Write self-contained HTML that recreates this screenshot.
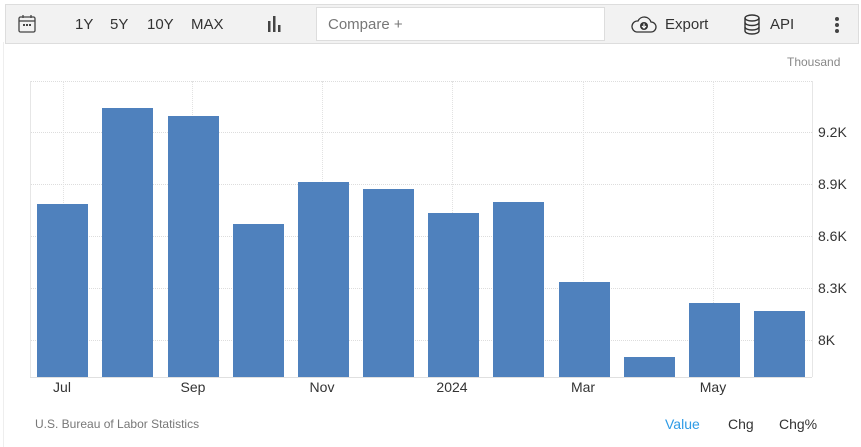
<!DOCTYPE html>
<html><head><style>
body{margin:0;width:861px;height:447px;background:#fff;font-family:"Liberation Sans",sans-serif;position:relative;overflow:hidden}
.a{position:absolute}
.tb{left:5px;top:4px;width:852px;height:38px;background:#f2f2f2;border:1px solid #ddd}
.t{font-size:15px;color:#333;top:16px}
.bar{position:absolute;background:#4f81bd;width:51px;bottom:70px}
.g{position:absolute;left:30px;width:782px;border-top:1px dotted #ddd}
.v{position:absolute;top:81px;height:296px;border-left:1px dotted #e2e2e2}
.yl{position:absolute;left:818px;font-size:14px;color:#333}
.xl{position:absolute;top:379px;font-size:14px;color:#333;width:60px;text-align:center}
</style></head><body>
<div class="a" style="left:3px;top:42px;width:1px;height:405px;background:#eee"></div>
<div class="a tb"></div>
<svg class="a" style="left:18px;top:14px" width="18" height="19" viewBox="0 0 18 19"><rect x="1" y="3" width="16" height="15" rx="1.5" fill="none" stroke="#444" stroke-width="1.3"/><line x1="1" y1="7" x2="17" y2="7" stroke="#444" stroke-width="1.3"/><line x1="5" y1="1" x2="5" y2="4" stroke="#444" stroke-width="1.3"/><line x1="13" y1="1" x2="13" y2="4" stroke="#444" stroke-width="1.3"/><rect x="5" y="10" width="2" height="2" fill="#444"/><rect x="8" y="10" width="2" height="2" fill="#444"/><rect x="11" y="10" width="2" height="2" fill="#444"/></svg>
<div class="a t" style="left:75px">1Y</div>
<div class="a t" style="left:110px">5Y</div>
<div class="a t" style="left:147px">10Y</div>
<div class="a t" style="left:191px">MAX</div>
<svg class="a" style="left:267px;top:16px" width="16" height="16"><rect x="1" y="5" width="2.5" height="11" fill="#444"/><rect x="6" y="0" width="2.5" height="16" fill="#444"/><rect x="11" y="9" width="2.5" height="7" fill="#444"/></svg>
<div class="a" style="left:316px;top:7px;width:287px;height:32px;background:#fff;border:1px solid #ddd"></div>
<div class="a t" style="left:328px;color:#777">Compare +</div>
<svg class="a" style="left:631px;top:16px" width="26" height="18" viewBox="0 0 26 18"><path d="M6 16 H20 A5 5 0 0 0 20 6 A7 7 0 0 0 7 5 A5.5 5.5 0 0 0 6 16 Z" fill="none" stroke="#333" stroke-width="1.3"/><circle cx="13" cy="10" r="4" fill="#333"/><path d="M13 7.5 V12 M11 10 L13 12 L15 10" stroke="#fff" stroke-width="1.2" fill="none"/></svg>
<div class="a t" style="left:665px">Export</div>
<svg class="a" style="left:743px;top:14px" width="18" height="21" viewBox="0 0 18 21"><g fill="none" stroke="#333" stroke-width="1.4"><ellipse cx="9" cy="4" rx="7" ry="3"/><path d="M2 4 V17 A7 3 0 0 0 16 17 V4"/><path d="M2 8.5 A7 3 0 0 0 16 8.5 M2 13 A7 3 0 0 0 16 13"/></g></svg>
<div class="a t" style="left:770px">API</div>
<div class="a" style="left:835px;top:17px;width:4px;height:4px;border-radius:2px;background:#444;box-shadow:0 6px 0 #444,0 12px 0 #444"></div>
<div class="a" style="left:787px;top:55px;font-size:12px;color:#888">Thousand</div>
<div class="g" style="top:81px"></div>
<div class="g" style="top:132px"></div>
<div class="g" style="top:184px"></div>
<div class="g" style="top:236px"></div>
<div class="g" style="top:288px"></div>
<div class="g" style="top:340px"></div>
<div class="v" style="left:30px;border-left:1px solid #e6e6e6"></div>
<div class="v" style="left:63px"></div><div class="v" style="left:192px"></div><div class="v" style="left:322px"></div><div class="v" style="left:452px"></div><div class="v" style="left:583px"></div><div class="v" style="left:713px"></div>
<div class="v" style="left:812px;border-left:1px solid #e6e6e6"></div>
<div class="a" style="left:30px;top:377px;width:782px;height:1px;background:#e0e0e0"></div>
<div class="bar" style="left:37px;top:204px"></div>
<div class="bar" style="left:102px;top:108px"></div>
<div class="bar" style="left:168px;top:116px"></div>
<div class="bar" style="left:233px;top:224px"></div>
<div class="bar" style="left:298px;top:182px"></div>
<div class="bar" style="left:363px;top:189px"></div>
<div class="bar" style="left:428px;top:213px"></div>
<div class="bar" style="left:493px;top:202px"></div>
<div class="bar" style="left:559px;top:282px"></div>
<div class="bar" style="left:624px;top:357px"></div>
<div class="bar" style="left:689px;top:303px"></div>
<div class="bar" style="left:754px;top:311px"></div>
<div class="yl" style="top:124px">9.2K</div>
<div class="yl" style="top:176px">8.9K</div>
<div class="yl" style="top:228px">8.6K</div>
<div class="yl" style="top:280px">8.3K</div>
<div class="yl" style="top:332px">8K</div>
<div class="xl" style="left:32px">Jul</div>
<div class="xl" style="left:163px">Sep</div>
<div class="xl" style="left:292px">Nov</div>
<div class="xl" style="left:422px">2024</div>
<div class="xl" style="left:553px">Mar</div>
<div class="xl" style="left:683px">May</div>
<div class="a" style="left:35px;top:417px;font-size:12px;color:#777">U.S. Bureau of Labor Statistics</div>
<div class="a" style="left:665px;top:416px;font-size:14px;color:#2e9be6">Value</div>
<div class="a" style="left:728px;top:416px;font-size:14px;color:#333">Chg</div>
<div class="a" style="left:779px;top:416px;font-size:14px;color:#333">Chg%</div>
</body></html>
